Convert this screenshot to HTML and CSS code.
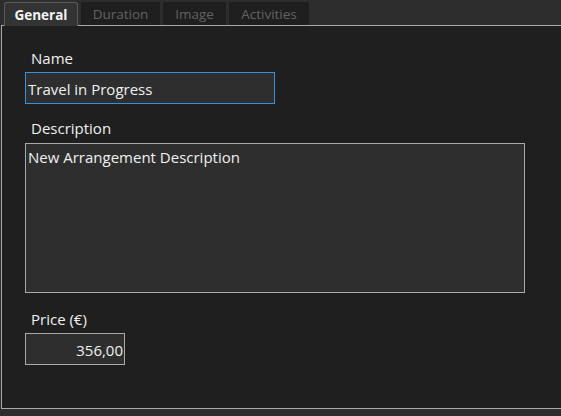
FILE: index.html
```html
<!DOCTYPE html>
<html>
<head>
<meta charset="utf-8">
<link rel="stylesheet" href="styles.css">
</head>
<body>
<div class="window">
  <div class="tabs">
    <div class="tab active">General</div>
    <div class="tab">Duration</div>
    <div class="tab">Image</div>
    <div class="tab">Activities</div>
  </div>
  <div class="panel">
    <label class="label">Name</label>
    <div class="input focused">Travel in Progress</div>
    <label class="label">Description</label>
    <div class="input area">New Arrangement Description</div>
    <label class="label">Price (€)</label>
    <div class="input price">356,00</div>
  </div>
</div>
</body>
</html>
```
FILE: styles.css
```css
html, body {
  margin: 0;
  padding: 0;
  background: #2d2d2d;
  width: 561px;
  height: 416px;
  overflow: hidden;
  font-family: "Open Sans", "Noto Sans", sans-serif;
  font-size: 14px;
  color: #f0f0f0;
}
.window {
  display: flex;
  flex-direction: column;
}
.tabs {
  display: flex;
  gap: 3px;
  padding: 2px 0 0 4px;
  height: 23px;
  position: relative;
  z-index: 1;
}
.tab {
  box-sizing: border-box;
  height: 23px;
  background: #1f1f1f;
  color: #626262;
  display: flex;
  align-items: center;
  justify-content: center;
  font-size: 13.5px;
}
.tab:nth-child(2) { width: 79px; }
.tab:nth-child(3) { width: 63px; }
.tab:nth-child(4) { width: 80px; }
.tab.active {
  width: 74px;
  background: #333333;
  color: #f4f4f4;
  font-weight: bold;
  font-size: 13.5px;
  border: 1px solid #5a5a5a;
  border-bottom: none;
  border-radius: 3px 3px 0 0;
  height: 24px;
}
.panel {
  box-sizing: border-box;
  margin-left: 1px;
  width: 560px;
  height: 384px;
  background: #1f1f1f;
  border: 1px solid #a9a9a9;
  border-right: none;
  padding: 22px 0 0 23px;
  display: flex;
  flex-direction: column;
  align-items: flex-start;
}
.label {
  margin-left: 6px;
  font-size: 15px;
  line-height: 20px;
  margin-bottom: 4px;
}
.input {
  box-sizing: border-box;
  background: #2e2e2e;
  border: 1px solid #a9a9a9;
  padding: 0 2px;
  font-size: 15px;
  line-height: 20px;
}
.input.focused {
  width: 250px;
  height: 32px;
  border-color: #3c8fdc;
  padding-top: 6px;
  margin-bottom: 14px;
}
.input.area {
  width: 500px;
  height: 150px;
  padding-top: 3px;
  margin-bottom: 16px;
}
.input.price {
  width: 100px;
  height: 32px;
  text-align: right;
  padding-top: 6px;
  padding-right: 1px;
}
.focused + .label {
  margin-bottom: 5px;
}
```
